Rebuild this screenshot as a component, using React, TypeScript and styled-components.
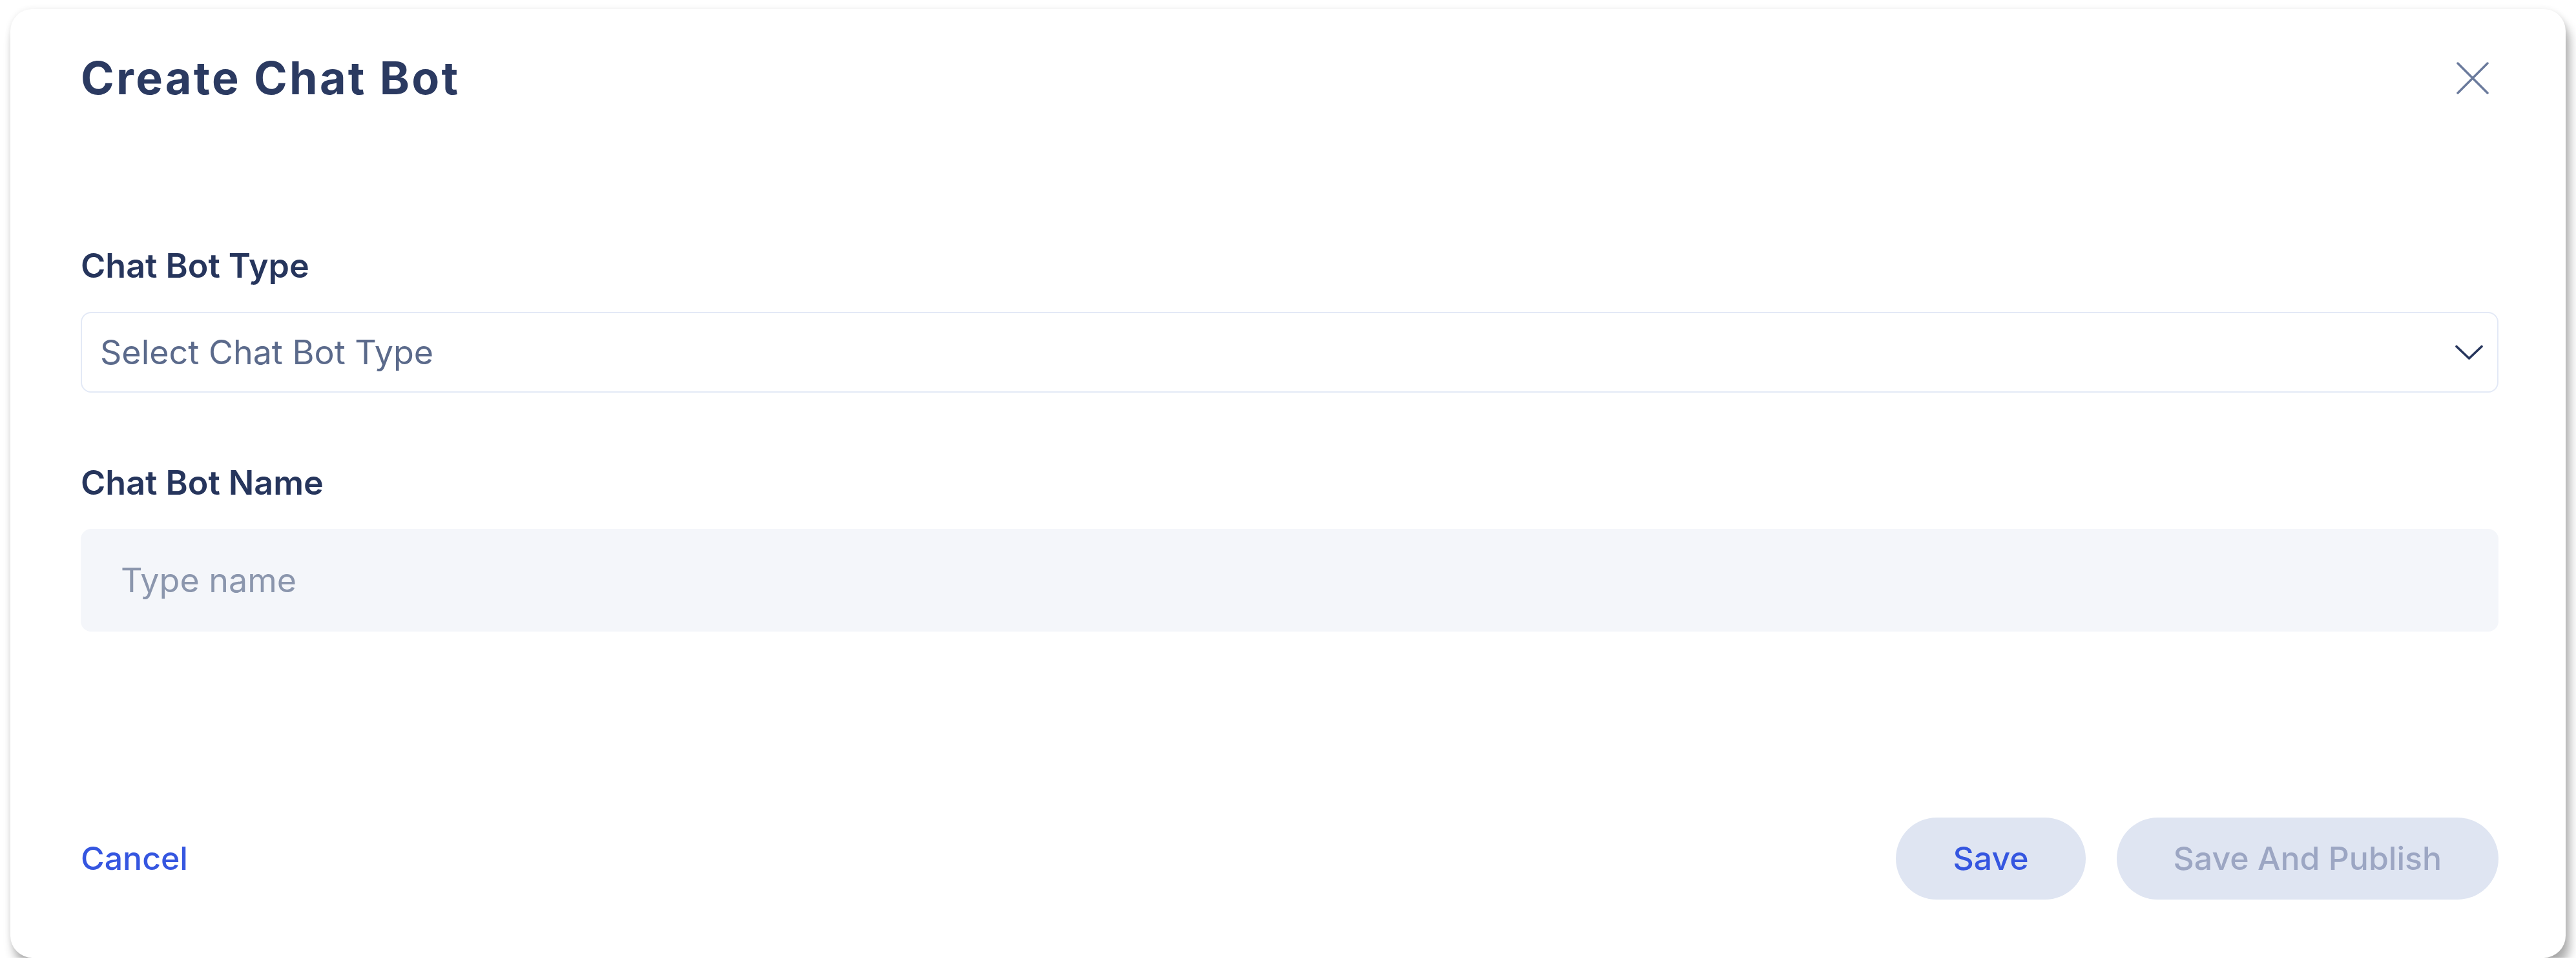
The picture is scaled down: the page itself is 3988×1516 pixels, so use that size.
import React from "react";
import styled, { createGlobalStyle } from "styled-components";

const GlobalStyle = createGlobalStyle`
  html, body {
    margin: 0;
    padding: 0;
    background: #ffffff;
  }
  * { box-sizing: border-box; }
  body {
    font-family: Inter, "Noto Sans", "Liberation Sans", sans-serif;
  }
`;

const Page = styled.div`
  padding: 14px 16px 0 16px;
`;

const Card = styled.div`
  width: 3956px;
  height: 1469px;
  background: #ffffff;
  border-radius: 34px;
  box-shadow: 0 0 10px rgba(0, 0, 0, 0.08), 6px 16px 16px rgba(0, 0, 0, 0.32);
  padding: 64px 104px 90px 109px;
  display: flex;
  flex-direction: column;
`;

const Header = styled.div`
  display: flex;
  align-items: center;
  justify-content: space-between;
  height: 85px;
`;

const Title = styled.h1`
  margin: 0;
  font-family: Inter, "Noto Sans", sans-serif;
  font-weight: 700;
  font-size: 70px;
  line-height: 85px;
  color: #2b3a61;
  letter-spacing: 3.3px;
`;

const CloseButton = styled.button`
  width: 50px;
  height: 50px;
  margin-right: 15px;
  padding: 0;
  border: none;
  background: transparent;
  display: flex;
  align-items: center;
  justify-content: center;
  cursor: pointer;
`;

const Field = styled.div<{ $top: number }>`
  display: flex;
  flex-direction: column;
  gap: 40px;
  margin-top: ${(p) => p.$top}px;
`;

const Label = styled.label`
  font-family: Inter, "Noto Sans", sans-serif;
  font-weight: 600;
  font-size: 52px;
  line-height: 63px;
  color: #26355c;
`;

const SelectBox = styled.div`
  height: 125px;
  border: 2px solid #e3e9f6;
  border-radius: 16px;
  background: #ffffff;
  display: flex;
  align-items: center;
  justify-content: space-between;
  padding: 0 22px 0 28px;
`;

const Placeholder = styled.span<{ $tone: "select" | "input" }>`
  font-family: Inter, "Noto Sans", sans-serif;
  font-weight: 400;
  font-size: 52px;
  line-height: 63px;
  color: ${(p) => (p.$tone === "select" ? "#5b6a8b" : "#8b96ad")};
`;

const InputBox = styled.div`
  height: 159px;
  border-radius: 16px;
  background: #f4f6fa;
  display: flex;
  align-items: center;
  padding: 0 62px;
`;

const Footer = styled.div`
  margin-top: auto;
  display: flex;
  align-items: center;
  justify-content: space-between;
`;

const LinkButton = styled.button`
  border: none;
  background: transparent;
  padding: 0;
  font-family: Inter, "Noto Sans", sans-serif;
  font-weight: 500;
  font-size: 50px;
  line-height: 61px;
  color: #3556e0;
  cursor: pointer;
`;

const Actions = styled.div`
  display: flex;
  align-items: center;
  gap: 48px;
`;

const PillButton = styled.button<{ $disabled?: boolean }>`
  height: 127px;
  border: none;
  border-radius: 64px;
  background: #dfe5f2;
  padding: 0 88px;
  font-family: Inter, "Noto Sans", sans-serif;
  font-weight: 500;
  font-size: 50px;
  line-height: 61px;
  color: ${(p) => (p.$disabled ? "#9ca6c3" : "#3556e0")};
  cursor: ${(p) => (p.$disabled ? "default" : "pointer")};
`;

const CloseIcon = () => (
  <svg width="50" height="50" viewBox="0 0 50 50" fill="none">
    <path
      d="M2 2 L48 48 M48 2 L2 48"
      stroke="#6a7a9c"
      strokeWidth="3.5"
      strokeLinecap="round"
    />
  </svg>
);

const ChevronIcon = () => (
  <svg width="43" height="24" viewBox="0 0 43 24" fill="none">
    <path
      d="M2 2.5 L21.5 21 L41 2.5"
      stroke="#26355c"
      strokeWidth="3.6"
      strokeLinecap="round"
      strokeLinejoin="round"
    />
  </svg>
);

export default function App() {
  return (
    <>
      <GlobalStyle />
      <Page>
        <Card>
          <Header>
            <Title>Create Chat Bot</Title>
            <CloseButton aria-label="Close">
              <CloseIcon />
            </CloseButton>
          </Header>

          <Field $top={217}>
            <Label>Chat Bot Type</Label>
            <SelectBox>
              <Placeholder $tone="select">Select Chat Bot Type</Placeholder>
              <ChevronIcon />
            </SelectBox>
          </Field>

          <Field $top={108}>
            <Label>Chat Bot Name</Label>
            <InputBox>
              <Placeholder $tone="input">Type name</Placeholder>
            </InputBox>
          </Field>

          <Footer>
            <LinkButton>Cancel</LinkButton>
            <Actions>
              <PillButton>Save</PillButton>
              <PillButton $disabled>Save And Publish</PillButton>
            </Actions>
          </Footer>
        </Card>
      </Page>
    </>
  );
}
